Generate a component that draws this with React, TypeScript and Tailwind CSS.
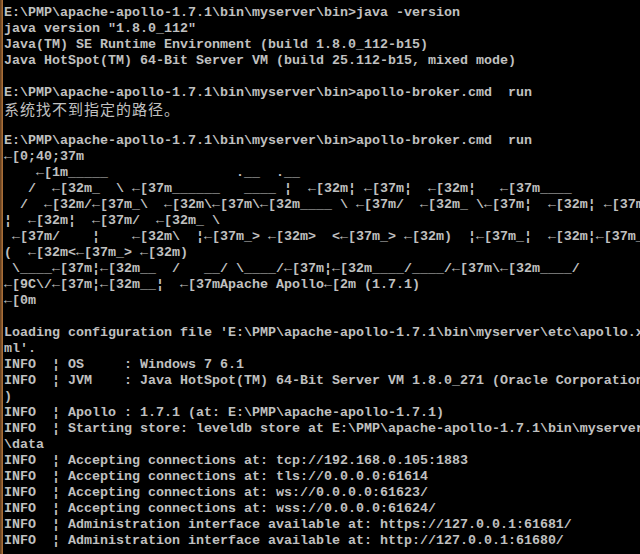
const lines: string[] = [
  'E:\\PMP\\apache-apollo-1.7.1\\bin\\myserver\\bin>java -version',
  'java version "1.8.0_112"',
  'Java(TM) SE Runtime Environment (build 1.8.0_112-b15)',
  'Java HotSpot(TM) 64-Bit Server VM (build 25.112-b15, mixed mode)',
  '',
  'E:\\PMP\\apache-apollo-1.7.1\\bin\\myserver\\bin>apollo-broker.cmd  run',
  '系统找不到指定的路径。',
  '',
  'E:\\PMP\\apache-apollo-1.7.1\\bin\\myserver\\bin>apollo-broker.cmd  run',
  '←[0;40;37m',
  '    ←[1m_____                .__  .__',
  '   /  ←[32m_  \\ ←[37m______   ____ ¦  ←[32m¦ ←[37m¦  ←[32m¦   ←[37m____',
  '  /  ←[32m/←[37m_\\  ←[32m\\←[37m\\←[32m____ \\ ←[37m/  ←[32m_ \\←[37m¦  ←[32m¦ ←[37m',
  '¦  ←[32m¦  ←[37m/  ←[32m_ \\',
  ' ←[37m/    ¦    ←[32m\\  ¦←[37m_> ←[32m>  <←[37m_> ←[32m)  ¦←[37m_¦  ←[32m¦←[37m_',
  '(  ←[32m<←[37m_> ←[32m)',
  ' \\____←[37m¦←[32m__  /   __/ \\____/←[37m¦←[32m____/____/←[37m\\←[32m____/',
  '←[9C\\/←[37m¦←[32m__¦  ←[37mApache Apollo←[2m (1.7.1)',
  '←[0m',
  '',
  "Loading configuration file 'E:\\PMP\\apache-apollo-1.7.1\\bin\\myserver\\etc\\apollo.x",
  "ml'.",
  'INFO  ¦ OS     : Windows 7 6.1',
  'INFO  ¦ JVM    : Java HotSpot(TM) 64-Bit Server VM 1.8.0_271 (Oracle Corporation',
  ')',
  'INFO  ¦ Apollo : 1.7.1 (at: E:\\PMP\\apache-apollo-1.7.1)',
  'INFO  ¦ Starting store: leveldb store at E:\\PMP\\apache-apollo-1.7.1\\bin\\myserver',
  '\\data',
  'INFO  ¦ Accepting connections at: tcp://192.168.0.105:1883',
  'INFO  ¦ Accepting connections at: tls://0.0.0.0:61614',
  'INFO  ¦ Accepting connections at: ws://0.0.0.0:61623/',
  'INFO  ¦ Accepting connections at: wss://0.0.0.0:61624/',
  'INFO  ¦ Administration interface available at: https://127.0.0.1:61681/',
  'INFO  ¦ Administration interface available at: http://127.0.0.1:61680/',
];

export default function App() {
  return (
    <div className="flex h-[554px] w-[640px] overflow-hidden bg-black">
      {/* window frame edge */}
      <div className="w-[3px] shrink-0 bg-gradient-to-r from-[#5a391c] to-[#b9793e]" />

      {/* console text, 80 columns, wraps like cmd.exe */}
      <div className="flex-1 overflow-hidden pl-[1px] pt-[5px] font-['Liberation_Mono','Noto_Sans_CJK_SC',monospace] text-[13.33px] font-bold text-[#c0c0c0]">
        {lines.map((line, i) =>
          /[\u4e00-\u9fff]/.test(line) ? (
            <div
              key={i}
              className="h-4 whitespace-pre font-['Noto_Sans_CJK_SC',sans-serif] text-[15px] font-normal leading-4 tracking-[1px]"
            >
              {line}
            </div>
          ) : (
            <div key={i} className="h-4 whitespace-pre leading-4">
              {line || ' '}
            </div>
          )
        )}
      </div>
    </div>
  );
}
